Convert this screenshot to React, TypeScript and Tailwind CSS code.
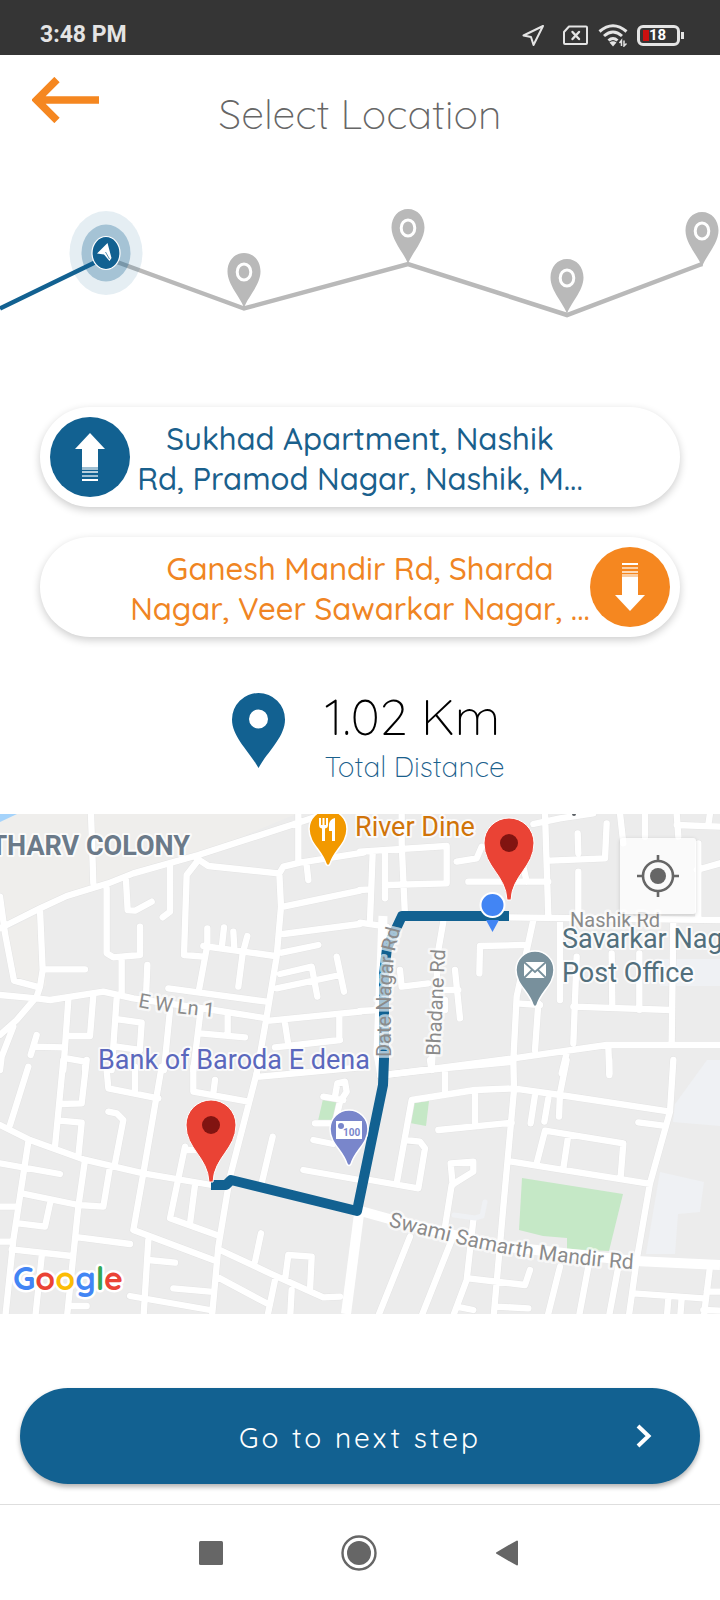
import React from "react";

const addressFont = "font-['Quicksand','Lato',sans-serif]";

function StatusBar() {
  return (
    <header className="flex h-[55px] items-end justify-between bg-[#353535] pr-10 pb-2 pl-10 font-['Roboto',sans-serif] text-[#e4e4e4]">
      <span className="text-[23px] leading-6 font-bold">3:48 PM</span>
      <div className="flex h-6 items-center">
        <svg className="mr-4 h-6 w-6" viewBox="0 0 24 24" fill="none" stroke="currentColor" strokeWidth="2" strokeLinejoin="round">
          <path d="M22 3 2.500 12.500 10 14 12.500 22Z" />
        </svg>
        <svg className="mr-2 h-6 w-7" viewBox="0 0 28 24" fill="none" stroke="currentColor" strokeWidth="2" strokeLinejoin="round" strokeLinecap="round">
          <path d="M8 3.500H25Q26 3.500 26 4.500V20Q26 21 25 21H4Q3 21 3 20V9Z" />
          <path d="m11.500 9 6.500 7M18 9l-6.500 7" strokeWidth="2.400" />
        </svg>
        <svg className="mr-2 h-6 w-8" viewBox="0 0 32 24" fill="none" stroke="currentColor" strokeWidth="3">
          <path d="M2.500 8.500Q16-3 29.500 8.500" />
          <path d="M7 13Q16 5 25 13" />
          <path d="M11.500 17.500Q16 13.500 20.500 17.500" />
          <path d="M12.500 19.500 16 23.500 19.500 19.500Q16 17 12.500 19.500Z" fill="currentColor" stroke="none" />
          <path d="M24.500 23V17.500L22.500 20M27 17.500V23L29.500 20.500" strokeWidth="1.500" />
        </svg>
        <div className="relative flex h-[21px] w-[43px] items-center rounded-[6px] border-[3px] border-[#e4e4e4] pl-[3px]">
          <span className="h-[11px] w-[6px] bg-[#c91010]" />
          <span className="text-[15px] leading-4 font-bold text-white">18</span>
          <span className="absolute -right-[7px] h-[7px] w-[3px] bg-[#e4e4e4]" />
        </div>
      </div>
    </header>
  );
}

function StepPin({ x, y }: { x: number; y: number }) {
  return (
    <g transform={`translate(${x} ${y})`}>
      <path d="M0 1C-3-9-16.500-22-16.500-35.500C-16.500-46-9.500-54 0-54S16.500-46 16.500-35.500C16.500-22 3-9 0 1Z" fill="#b9b9b9" />
      <ellipse cy="-35" rx="6.800" ry="8" fill="none" stroke="#fff" strokeWidth="3" />
    </g>
  );
}

function Stepper() {
  return (
    <svg className="block w-full" viewBox="0 0 720 120" role="img" aria-label="Step 1 of 5">
      <path d="M106 58 244 108.500 408 64 567 115 702 64" fill="none" stroke="#b9b9b9" strokeWidth="4.500" />
      <path d="M0 108.500 100 60" stroke="#126191" strokeWidth="4.500" />
      <ellipse cx="106" cy="53" rx="36.500" ry="42" fill="#126191" fillOpacity=".11" />
      <ellipse cx="106" cy="53" rx="24.500" ry="28.500" fill="#126191" fillOpacity=".3" />
      <ellipse cx="106" cy="53" rx="14" ry="16.500" fill="#126191" stroke="#fff" strokeWidth="1.200" />
      <path d="M107.500 43 97 53.500 104 54.500 109.500 61 111.500 58Z" fill="#fff" />
      <path d="M105.500 52 109.500 59" stroke="#126191" strokeWidth=".7" />
      <StepPin x={244} y={107} />
      <StepPin x={408} y={63} />
      <StepPin x={567} y={113} />
      <StepPin x={702} y={66} />
    </svg>
  );
}

function ArrowBadge({ down }: { down?: boolean }) {
  return (
    <span className={`flex size-20 shrink-0 items-center justify-center rounded-full ${down ? "bg-[#f58720]" : "bg-[#126191]"}`}>
      <svg className={`h-12 w-8 ${down ? "rotate-180" : ""}`} viewBox="0 0 32 48" fill="#fff">
        <path d="M16 0 31 16H24V34H8V16H1Z" />
        <path d="M8 34H24V37H8Z" opacity=".6" />
        <path d="M8 38H24V40H8Z" opacity=".7" />
        <path d="M8 42H24V44H8Z" opacity=".6" />
        <path d="M8 46H24V48H8Z" />
      </svg>
    </span>
  );
}

function AddressCard({ lines, down }: { lines: string[]; down?: boolean }) {
  return (
    <button
      type="button"
      className={`flex min-h-[100px] w-full items-center rounded-full bg-white px-[10px] shadow-[0_3px_9px_rgba(0,0,0,0.2)] ${down ? "flex-row-reverse text-[#f08523]" : "text-[#1a608c]"}`}
    >
      <ArrowBadge down={down} />
      <span className={`min-w-0 flex-1 pt-1 text-center ${addressFont} text-[31px] leading-10 font-medium`}>
        {lines.map((line) => (
          <span key={line} className="block whitespace-nowrap">
            {line}
          </span>
        ))}
      </span>
      <span className="w-20 shrink-0" />
    </button>
  );
}

const tiles = [
  {
    at: "translate(0 -4) scale(.33333)",
    d: "M0 355 20 345 120 295 200 258 325 220 400 190 595 135 890 40 1010 0M273 10 280 220M320 235V430L340 442 420 435V350M378 212 383 300 405 302 455 275M510 165V305L488 322M595 150 560 195 552 435 610 440M622 355V405L597 540M610 408 825 438M672 352 665 415M700 365 703 415M742 378 728 430 715 530M590 145 625 168 835 190M895 10V150M1090 128 900 158 850 170 838 190 843 290 830 440 800 620 770 790M920 165 925 210M850 290 1080 242M850 372 1080 342M845 428 955 405M840 492 935 470 952 560M830 535 1020 495M1010 440 1032 545M810 632 1080 605M855 640 865 705M825 712 1020 690M1018 620V690M120 300 128 480 120 530 110 560 50 630 0 675M130 478H255M0 260 15 370 42 512 110 530M0 555 110 565 150 570 310 545 400 565 640 600 800 625M365 450V550M442 465 438 560M505 535 800 575M350 565 335 780M355 628 425 638 420 710M350 710 420 720M510 600 492 780M602 600 580 780M600 670 735 682M683 615V670M205 570 190 780M280 555 270 678H200M110 675 92 735M100 710 190 712M200 745 255 755V780M40 650 5 740 0 780",
  },
  {
    at: "translate(360 -4) scale(.33333)",
    d: "M0 125 260 108V220L80 225M38 130 30 330M75 130V265M125 15V100L135 320M290 155 350 145 365 110M0 240 30 238M0 338 80 350M325 215H565M490 170 500 215M555 10 565 320M520 42 600 25 700 10M440 322 1080 330M740 40 735 145 570 152M653 70 655 130M655 185V320M780 10 790 100M855 10V80M950 10 955 80M950 45 1080 50M1050 10 1045 45M1010 180 1080 160M1015 100V320M520 330 470 560 460 750M490 405 360 408 358 490M600 330V570M250 335 235 420 215 780M120 480 125 530 205 520M285 480 300 625M240 540H295M255 570V600H235M0 603 60 600M535 580 525 720M470 580 540 585M650 440 640 700M640 590 935 600M755 430 757 590M838 430V600M940 330 935 700M60 797 460 745 740 705H1080M745 710 748 790M620 730 605 790",
  },
  {
    at: "translate(0 246) scale(.33333)",
    d: "M0 195 90 240 250 298 430 340 635 375M85 20 30 195M190 0 165 260M260 0 245 130 180 132M180 182 245 188 235 290M320 30 325 85 475 115M405 20V90M485 20 430 340 400 510M325 155 350 160 370 180 345 310M580 20V95L745 125M645 60 640 100M770 40 690 350 655 560 635 780M780 50 1080 22M555 260 510 475 650 525M560 270H600M585 375 570 490M818 230 785 370M910 330 1080 360M970 110 1030 120M1005 110 1012 70 1035 65 1040 95 1020 125 1005 190M945 190H1000M940 240 1000 252M0 310 180 342M85 245 40 540 15 780M65 400 235 435 310 440 330 320M0 440H45M255 300 235 440 200 780M150 430 135 500 55 490M235 532 390 552M35 568 215 588M0 545H30M125 590 105 780M400 510 640 600M445 540 430 780M445 600 525 608M520 685 630 695M390 708 630 750M660 570 810 640 970 712 1020 710M650 650 800 730M825 660 800 780M875 690 870 780M783 520 765 605M855 660 865 585 935 590 930 690M210 738H260",
  },
  {
    at: "translate(360 246) scale(.33333)",
    d: "M70 45 250 25 460 5M255 30V100M460 0 462 90 430 440 400 780M210 0 213 20M155 120 345 90 460 85 600 105 930 155M155 120 110 370M30 360 175 385 195 265 180 245 135 240M345 95V200M235 210 455 188M525 105 512 190M565 115 553 185M600 100 597 170M620 0 600 100M748 0V45M940 0 930 155 870 370 830 600 805 780M835 187 910 197M455 305 870 372M530 310 555 212 790 250 782 350M625 225 610 325M255 500 275 375 340 335V305L272 310 278 375M150 530 50 780M275 540 180 780M340 480 320 660 275 780M325 655 495 675 510 630M410 740 505 745M600 620 560 780M685 620 655 780M775 620 745 780M820 700 1030 715M1050 620 1030 780M1040 695H1080M925 715 920 780M965 715 960 780M1030 750 1080 752M290 740 340 750",
  },
];

function RedPin({ x, y }: { x: number; y: number }) {
  return (
    <g transform={`translate(${x} ${y})`}>
      <path d="M-2 0C-3-25-25-33-25-57A25 25 0 0 1 25-57C25-33 3-25 2 0Z" fill="#ea4335" stroke="#fff" strokeWidth="1" />
      <circle cy="-57" r="9" fill="#811411" />
    </g>
  );
}

function PlacePin({ x, y, fill, children }: { x: number; y: number; fill: string; children: React.ReactNode }) {
  return (
    <g transform={`translate(${x} ${y})`}>
      <path d="M-2 0C-6-14-19-20-19-35A19 19 0 0 1 19-35C19-20 6-14 2 0Q0 3-2 0Z" fill={fill} stroke="#fff" strokeWidth="1.500" />
      {children}
    </g>
  );
}

function Map() {
  return (
    <section className="relative w-full" aria-label="Route map">
      <svg className="block w-full" viewBox="0 0 720 500" fontFamily="Roboto, sans-serif">
        <path d="M0 0H720V500H0Z" fill="#ececec" />
        <path d="M0 0H296L200 40 70 80 0 114Z" fill="#efeeec" />
        <path d="M0 114 6 116 42 98 46 172 14 166Z" fill="#efeeec" />
        <path d="M0 0H17L0 8Z" fill="#a5d3fb" />
        <g fill="#eff1f4">
          <path d="M720 246H707L675 290 673 308 720 312Z" />
          <path d="M660 358 704 368 700 398 678 400 675 440 646 440Z" />
          <path d="M660 145H720V172H660Z" />
        </g>
        <g fill="#c5e8c6">
          <path d="M323 285 338 288 333 307H318Z" />
          <path d="M414 289 429 287 426 312 410 309Z" />
          <path d="M522 364 623 380 609 437 567 435V424L543 422 519 416Z" />
        </g>
        {tiles.map((tile) => (
          <g key={tile.at} transform={tile.at} fill="none" strokeLinecap="round" strokeLinejoin="round">
            <path d={tile.d} stroke="#e4e4e4" strokeWidth="22" />
          </g>
        ))}
        {tiles.map((tile) => (
          <g key={tile.at} transform={tile.at} fill="none" strokeLinecap="round" strokeLinejoin="round">
            <path d={tile.d} stroke="#fff" strokeWidth="19" />
          </g>
        ))}
        <g fill="none" stroke="#fff" strokeWidth="10" strokeLinejoin="round">
          <path d="M357 396 393 406 500 432 635 447 720 451" />
          <path d="M359 400 346 500" />
          <path d="M383 102 378 240 382 262" strokeWidth="9" />
        </g>
        <path d="M454 401 475 404 482 402 485 388" fill="none" stroke="#eff1f4" strokeWidth="5" strokeLinecap="round" />

        <path d="M211 371H226L231 366 357 397 383 271 384 245V160L387 134 402 102H509" fill="none" stroke="#126191" strokeWidth="10" strokeLinejoin="round" />

        <defs>
          <path id="date-road" d="M391 243 391 180 394 140 406 92" />
          <path id="bhadane-road" d="M440 242 446 120" />
          <path id="swami-road" d="M388 412 Q480 437 537 445 T645 456" />
          <path id="lane-one" d="M138 193 Q175 200 225 204" />
        </defs>
        <g fill="#8b8b8b" stroke="#fff" strokeOpacity=".65" strokeWidth="5" strokeLinejoin="round" paintOrder="stroke">
          <text fontSize="20"><textPath href="#date-road">Date Nagar Rd</textPath></text>
          <text fontSize="20"><textPath href="#bhadane-road">Bhadane Rd</textPath></text>
          <text fontSize="21"><textPath href="#swami-road">Swami Samarth Mandir Rd</textPath></text>
          <text fontSize="20"><textPath href="#lane-one">E W Ln 1</textPath></text>
          <text x="570" y="113" fontSize="20">Nashik Rd</text>
        </g>
        <g fontSize="27" stroke="#fff" strokeOpacity=".8" strokeWidth="4" strokeLinejoin="round" paintOrder="stroke">
          <text x="190" y="41" textAnchor="end" fontWeight="700" fill="#6b7a89">THARV COLONY</text>
          <text x="355" y="22" fill="#d07409">River Dine</text>
          <text x="562" y="134" fill="#526f7c">Savarkar Nagar</text>
          <text x="562" y="168" fill="#526f7c">Post Office</text>
          <text x="98" y="255" fill="#5b68bd">Bank of Baroda E dena</text>
        </g>
        <circle cx="574" cy="0" r="2" fill="#5b6065" />

        <PlacePin x={328} y={50} fill="#f29900">
          <path d="M-9-46V-39Q-9-36-6-35.500V-23H-3V-35.500Q0-36 0-39V-46H-2V-39H-3.500V-46H-5.500V-39H-7V-46ZM7-46V-23H4V-33H1V-40Q2-45 7-46Z" fill="#fff" />
        </PlacePin>
        <PlacePin x={535} y={191} fill="#78909c">
          <path d="M-11-43H11V-27H-11Z" fill="#fff" />
          <path d="M-11-43 0-33 11-43M-11-27-3-35M11-27 3-35" stroke="#78909c" strokeWidth="1.800" fill="none" />
        </PlacePin>
        <PlacePin x={349} y={350} fill="#7986cb">
          <path d="M-13-43H13V-25H-13Z" fill="#fff" />
          <circle cx="-8" cy="-38" r="3" fill="#7986cb" />
          <text x="-6" y="-28" fontSize="10" fontWeight="700" fill="#7986cb">100</text>
        </PlacePin>
        <RedPin x={211} y={368} />
        <path d="M486 106 492.500 118 499 106Z" fill="#4285f4" />
        <circle cx="492.500" cy="91" r="12" fill="#4285f4" stroke="#fff" strokeWidth="2" />
        <RedPin x={509} y={86} />
        <text x="13" y="476" fontFamily="Quicksand, Lato, sans-serif" fontSize="32" fontWeight="700" fill="#4285f4" stroke="#fff" strokeWidth="5" strokeLinejoin="round" paintOrder="stroke">
          G<tspan fill="#ea4335">o</tspan><tspan fill="#fbbc05">o</tspan>g<tspan fill="#34a853">l</tspan><tspan fill="#ea4335">e</tspan>
        </text>
      </svg>
      <button type="button" aria-label="My location" className="absolute top-6 right-6 flex size-[76px] items-center justify-center rounded-[3px] bg-white/75 shadow-[0_1px_4px_rgba(0,0,0,0.15)]">
        <svg className="size-[42px]" viewBox="0 0 42 42" fill="none" stroke="#666" strokeWidth="2.600">
          <circle cx="21" cy="21" r="15" />
          <circle cx="21" cy="21" r="8" fill="#666" stroke="none" />
          <path d="M21 0V7M21 35V42M0 21H7M35 21H42" />
        </svg>
      </button>
    </section>
  );
}

export default function App() {
  return (
    <div className="flex min-h-screen w-full flex-col bg-white">
      <StatusBar />
      <main className="flex flex-1 flex-col">
        <div className="grid h-[145px] grid-cols-[100px_1fr_100px] items-start">
          <button type="button" aria-label="Back" className="mt-[22px] ml-8">
            <svg className="h-[46px] w-[68px]" viewBox="0 0 68 46" fill="none" stroke="#f58720" strokeWidth="7.500">
              <path d="M67 23H5M25 2.500 4.500 23 25 43.500" />
            </svg>
          </button>
          <h1 className="mt-[34px] text-center font-['Quicksand','Lato',sans-serif] text-[41px] leading-[50px] font-light text-[#666]">Select Location</h1>
        </div>
        <Stepper />
        <div className="mt-[87px] flex flex-col gap-[30px] px-10">
          <AddressCard lines={["Sukhad Apartment, Nashik", "Rd, Pramod Nagar, Nashik, M..."]} />
          <AddressCard down lines={["Ganesh Mandir Rd, Sharda", "Nagar, Veer Sawarkar Nagar, ..."]} />
        </div>
        <div className="mt-[50px] mb-[27px] flex items-start justify-center gap-10 pl-4">
          <svg className="mt-[6px] h-[75px] w-[53px]" viewBox="0 0 53 75" fill="#126191">
            <path fillRule="evenodd" d="M26.500 75C17 58 0 44 0 26.500A26.500 26.500 0 0 1 53 26.500C53 44 36 58 26.500 75ZM26.500 16.500A9.500 9.500 0 1 0 26.500 35.500A9.500 9.500 0 1 0 26.500 16.500Z" />
          </svg>
          <div className="font-['Quicksand','Lato',sans-serif] font-light">
            <p className="text-[50px] leading-[60px] text-black">1.02 Km</p>
            <p className="text-[28px] leading-10 text-[#1a608c]">Total Distance</p>
          </div>
        </div>
        <Map />
        <div className="px-5 pt-[74px] pb-5">
          <button type="button" className="grid h-24 w-full grid-cols-[64px_1fr_64px] items-center rounded-full bg-[#126191] text-white shadow-[0_3px_5px_rgba(0,0,0,0.3)]">
            <span className="col-start-2 pt-1 font-['Quicksand','Lato',sans-serif] text-[28px] leading-9 font-normal tracking-[3px]">Go to next step</span>
            <svg className="h-6 w-4" viewBox="0 0 16 24" fill="none" stroke="currentColor" strokeWidth="4">
              <path d="M2 2 12.500 12 2 22" />
            </svg>
          </button>
        </div>
      </main>
      <nav className="flex h-24 items-center justify-center gap-[118px] border-t border-[#dedede] pr-[3px] text-[#666]">
        <button type="button" aria-label="Recent apps">
          <svg className="size-6" viewBox="0 0 24 24"><rect width="24" height="24" rx="1.500" fill="currentColor" /></svg>
        </button>
        <button type="button" aria-label="Home">
          <svg className="size-9" viewBox="0 0 36 36" fill="none" stroke="currentColor" strokeWidth="2.400">
            <circle cx="18" cy="18" r="16.500" /><circle cx="18" cy="18" r="12" fill="currentColor" stroke="none" />
          </svg>
        </button>
        <button type="button" aria-label="Back to previous app">
          <svg className="h-7 w-6" viewBox="0 0 24 28" fill="currentColor" stroke="currentColor" strokeWidth="2" strokeLinejoin="round"><path d="M22 2.500V25.500L2 14Z" /></svg>
        </button>
      </nav>
    </div>
  );
}
